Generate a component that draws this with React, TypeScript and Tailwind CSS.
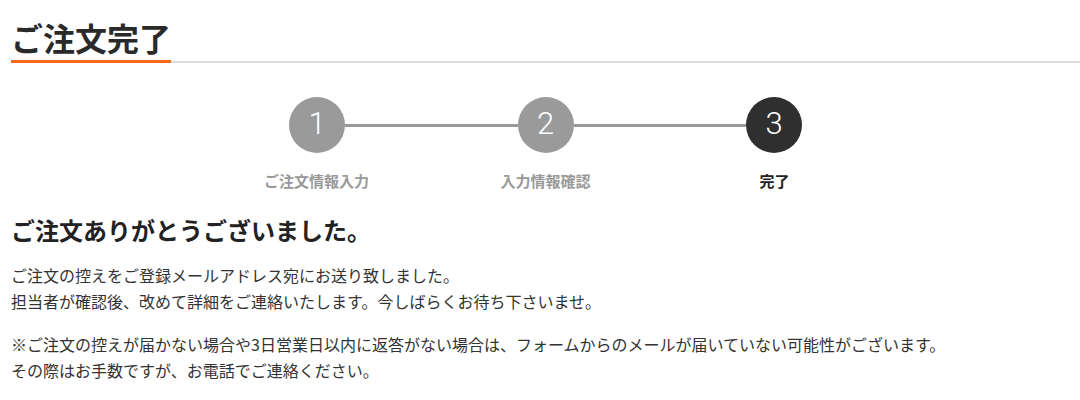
import React from "react";

const steps = [
  { n: "1", label: "ご注文情報入力", active: false },
  { n: "2", label: "入力情報確認", active: false },
  { n: "3", label: "完了", active: true },
];

function Circle({ n, active }: { n: string; active: boolean }) {
  return (
    <div
      className={
        "flex h-[56px] w-[56px] shrink-0 items-center justify-center rounded-full text-white " +
        (active ? "bg-[#2f2f2f]" : "bg-[#9a9a9a]")
      }
    >
      <span className="font-['Roboto','Liberation_Sans',sans-serif] text-[31px] font-light leading-none -mt-[4px]">
        {n}
      </span>
    </div>
  );
}

export default function App() {
  return (
    <div className="min-h-[400px] bg-white pl-[11px] font-['Noto_Sans_CJK_JP','Noto_Sans',sans-serif] text-[#333]">
      <h1 className="flex border-b-2 border-[#dcdcdc] pt-[19px] text-[32px] font-bold leading-[36px] text-[#2a2a2a]">
        <span className="-mb-[2px] inline-block w-[160px] whitespace-nowrap border-b-[3px] border-[#f8681a] pb-[5px]">
          ご注文完了
        </span>
      </h1>

      <div className="mt-[34px] flex flex-col items-center">
        <div className="flex w-[513px] items-center">
          <Circle n="1" active={false} />
          <div className="h-[3px] flex-1 bg-[#999]" />
          <Circle n="2" active={false} />
          <div className="h-[3px] flex-1 bg-[#999]" />
          <Circle n="3" active={true} />
        </div>
        <div className="mt-[17px] grid w-[687px] grid-cols-3 text-center text-[15px] font-bold leading-[22px]">
          {steps.map((s) => (
            <div key={s.n} className={s.active ? "text-[#222]" : "text-[#999]"}>
              {s.label}
            </div>
          ))}
        </div>
      </div>

      <h2 className="mt-[20px] text-[24px] font-bold leading-[36px] text-[#222]">
        ご注文ありがとうございました。
      </h2>

      <p className="mt-[14px] text-[16px] leading-[26px]">
        ご注文の控えをご登録メールアドレス宛にお送り致しました。
        <br />
        担当者が確認後、改めて詳細をご連絡いたします。今しばらくお待ち下さいませ。
      </p>

      <p className="mt-[17px] text-[16px] leading-[26px]">
        ※ご注文の控えが届かない場合や3日営業日以内に返答がない場合は、フォームからのメールが届いていない可能性がございます。
        <br />
        その際はお手数ですが、お電話でご連絡ください。
      </p>

      <p className="mt-[17px] text-[16px] leading-[26px]">
        お問い合わせ先：0120-000-000（平日 9:00〜18:00）
      </p>
    </div>
  );
}
